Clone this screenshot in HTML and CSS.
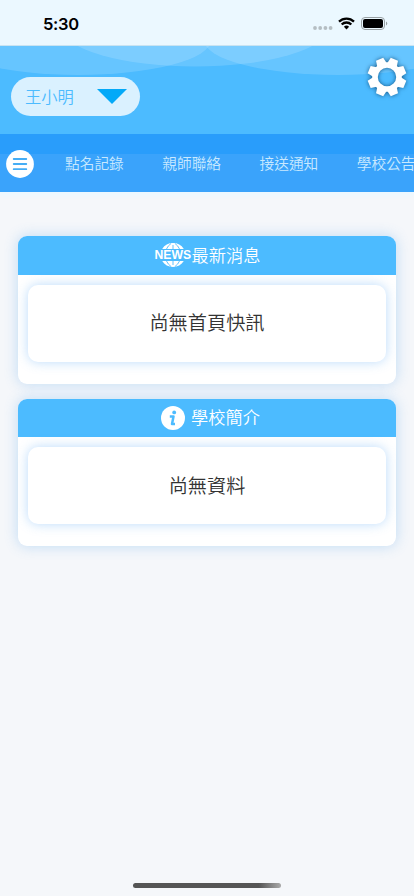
FILE: index.html
```
<!doctype html>
<html lang="zh-Hant">
    <head>
        <meta charset="UTF-8" />
        <meta name="viewport" content="width=device-width, initial-scale=1.0" />
        <title>首頁</title>
        <link rel="stylesheet" href="styles.css">
    </head>
    <body>
        <div class="status-bar">
            <span class="time">5:30</span>
            <div class="status-icons">
                <svg class="signal" width="20" height="4" viewBox="0 0 20 4" fill="#b5bec3">
                    <circle cx="2" cy="2" r="1.9" />
                    <circle cx="7.2" cy="2" r="1.9" />
                    <circle cx="12.4" cy="2" r="1.9" />
                    <circle cx="17.6" cy="2" r="1.9" />
                </svg>
                <svg class="wifi" width="17" height="13" viewBox="0 0 17 13" fill="none" stroke="#000" stroke-width="2.3">
                    <path d="M1 4.6a10.8 10.8 0 0 1 15 0" />
                    <path d="M3.7 7.5a6.8 6.8 0 0 1 9.6 0" />
                    <path d="M8.5 12.4 5.9 9.7a3.8 3.8 0 0 1 5.2 0z" fill="#000" stroke="none" />
                </svg>
                <svg class="battery" width="27" height="13" viewBox="0 0 27 13">
                    <rect x="0.5" y="0.5" width="23" height="12" rx="3.5" fill="none" stroke="#98a0a3" />
                    <rect x="2" y="2" width="20" height="9" rx="2" />
                    <path d="M25 4.5a2.2 2.2 0 0 1 0 4z" fill="#98a0a3" />
                </svg>
            </div>
        </div>

        <header class="header">
            <svg class="header-bg" width="414" height="88" viewBox="0 0 414 88" fill="#fff" fill-opacity="0.15">
                <ellipse cx="78" cy="-6" rx="133" ry="35" />
                <ellipse cx="195" cy="-17.5" rx="132" ry="38" />
                <ellipse cx="338" cy="-6" rx="134" ry="35" />
            </svg>
            <div class="student-select">
                <span>王小明</span>
                <svg width="30" height="15" viewBox="0 0 30 15" fill="#03a9f8">
                    <path d="M0 0h30L15 15z" />
                </svg>
            </div>
            <svg class="settings" width="40" height="40" viewBox="-20 -20 40 40">
                <g fill="#fff">
                    <g id="teeth">
                        <path id="tooth" d="M-5.3-12-3.9-19.3h7.8L5.3-12z" transform="rotate(22.5)" />
                        <use href="#tooth" transform="rotate(45)" />
                        <use href="#tooth" transform="rotate(90)" />
                        <use href="#tooth" transform="rotate(135)" />
                    </g>
                    <use href="#teeth" transform="rotate(180)" />
                </g>
                <circle r="12" fill="none" stroke="#fff" stroke-width="5.6" />
            </svg>
        </header>

        <nav class="nav">
            <svg class="menu" width="28" height="28" viewBox="0 0 28 28">
                <circle cx="14" cy="14" r="13.9" fill="#fff" />
                <path d="M7.7 9h12.6M7.7 14h12.6M7.7 19.2h12.6" stroke="#45adf5" stroke-width="1.8" stroke-linecap="round" />
            </svg>
            <div class="nav-links">
                <a>點名記錄</a>
                <a>親師聯絡</a>
                <a>接送通知</a>
                <a>學校公告</a>
            </div>
        </nav>

        <main class="content">
            <section class="card">
                <h2 class="card-title">
                    <svg class="news-icon" width="38" height="26" viewBox="0 0 38 26">
                        <path d="M8.2 6.9C10.5 3 14.500 1 19 1s8.500 2 10.800 5.900zM8.200 19.100C10.500 23 14.500 25 19 25s8.500-2 10.800-5.900z" fill="#fff" />
                        <g fill="none" stroke="#4cbbff" stroke-width="0.9">
                            <path d="M12.500 7Q14 3.600 17 1.500M25.500 7Q24 3.600 21 1.500M19 3v4" />
                            <path d="M12.500 19Q14 22.400 17 24.500M25.500 19Q24 22.400 21 24.500M19 19v4" />
                        </g>
                        <text x="0.5" y="17.400" textLength="36.500" lengthAdjust="spacingAndGlyphs">NEWS</text>
                    </svg>
                    <span>最新消息</span>
                </h2>
                <div class="card-body"><span>尚無首頁快訊</span></div>
            </section>

            <section class="card">
                <h2 class="card-title">
                    <svg class="info-icon" width="24" height="24" viewBox="0 0 24 24">
                        <circle cx="12" cy="12" r="12" fill="#fff" />
                        <circle cx="13.2" cy="6.4" r="1.9" fill="#4cbbff" />
                        <path d="M8.800 10.500h3.700l-1.500 7.500h3" fill="none" stroke="#4cbbff" stroke-width="2.500" stroke-linejoin="round" />
                    </svg>
                    <span>學校簡介</span>
                </h2>
                <div class="card-body"><span>尚無資料</span></div>
            </section>
        </main>

        <div class="home-indicator"></div>
    </body>
</html>
```

FILE: styles.css
```
:root {
    --main-blue: #4cbbff;
    --bg-color: #f5f7fa;
    --text-color: #333;
}

* {
    box-sizing: border-box;
    margin: 0;
}

body {
    display: flex;
    flex-direction: column;
    height: 896px;
    overflow: hidden;
    font-family: "Noto Sans CJK TC", sans-serif;
    font-weight: 350;
    background: var(--bg-color);
    color: var(--text-color);
}

svg {
    display: block;
    flex-shrink: 0;
}

.status-bar {
    display: flex;
    justify-content: space-between;
    height: 46px;
    padding: 14px 26px 0 43px;
    background: #ebf8ff;
    border-bottom: 1px solid #c9e3f1;
}

.time {
    font: 600 16.5px/20px Inter, sans-serif;
    letter-spacing: -0.3px;
    color: #000;
}

.status-icons {
    display: flex;
    align-items: flex-start;
    padding-top: 3px;
}

.signal {
    margin: 9px 5px 0 0;
}

.wifi {
    margin-right: 6px;
}

.header {
    position: relative;
    display: flex;
    justify-content: space-between;
    height: 88px;
    padding: 11px 7px 0 11px;
    background: var(--main-blue);
}

.header-bg {
    position: absolute;
    top: 0;
    left: 0;
}

.student-select {
    position: relative;
    display: flex;
    align-items: center;
    justify-content: space-between;
    width: 129px;
    height: 39px;
    margin-top: 20px;
    padding: 0 13px 0 14px;
    border-radius: 20px;
    background: #daf1ff;
    color: var(--main-blue);
    font-size: 16.3px;
}

.student-select span,
.card-title span,
.card-body span {
    padding-bottom: 2px;
}

.settings {
    position: relative;
    overflow: visible;
    filter: drop-shadow(0 0 2px rgba(0, 50, 90, 0.7));
}

.nav {
    display: flex;
    height: 58px;
    padding: 16px 0 0 6px;
    background: linear-gradient(#299dfb 20px, #3aa3fb 20px);
    box-shadow: 0 4px 3px #edf8ff;
    overflow: hidden;
}

.nav-links {
    display: flex;
    gap: 38.5px;
    margin-left: 31px;
    font-size: 14.7px;
    line-height: 25px;
    color: #c9e9ff;
    white-space: nowrap;
}

.content {
    display: flex;
    flex-direction: column;
    gap: 15px;
    padding: 44px 18px;
}

.card {
    height: 147.5px;
    border-radius: 9px;
    background: #fff;
    box-shadow: 0 0 14px rgba(76, 160, 235, 0.32);
}

.card-title {
    display: flex;
    align-items: center;
    justify-content: center;
    height: 38.5px;
    border-radius: 9px 9px 0 0;
    background: var(--main-blue);
    color: #fff;
    font-size: 17.2px;
    font-weight: 350;
}

.news-icon text {
    font: bold 12.5px "Liberation Sans", sans-serif;
    fill: #fff;
}

.info-icon {
    margin: 0 6px 0 7px;
}

.card-body {
    display: flex;
    align-items: center;
    justify-content: center;
    height: 77px;
    margin: 10px 10px 0;
    border-radius: 10px;
    background: #fff;
    box-shadow: 0 0 12px rgba(76, 160, 245, 0.38);
    font-size: 19.2px;
}

.home-indicator {
    width: 148px;
    height: 5px;
    margin: auto auto 8px;
    border-radius: 3px;
    background: linear-gradient(90deg, #555 85%, #aaa);
}
```
